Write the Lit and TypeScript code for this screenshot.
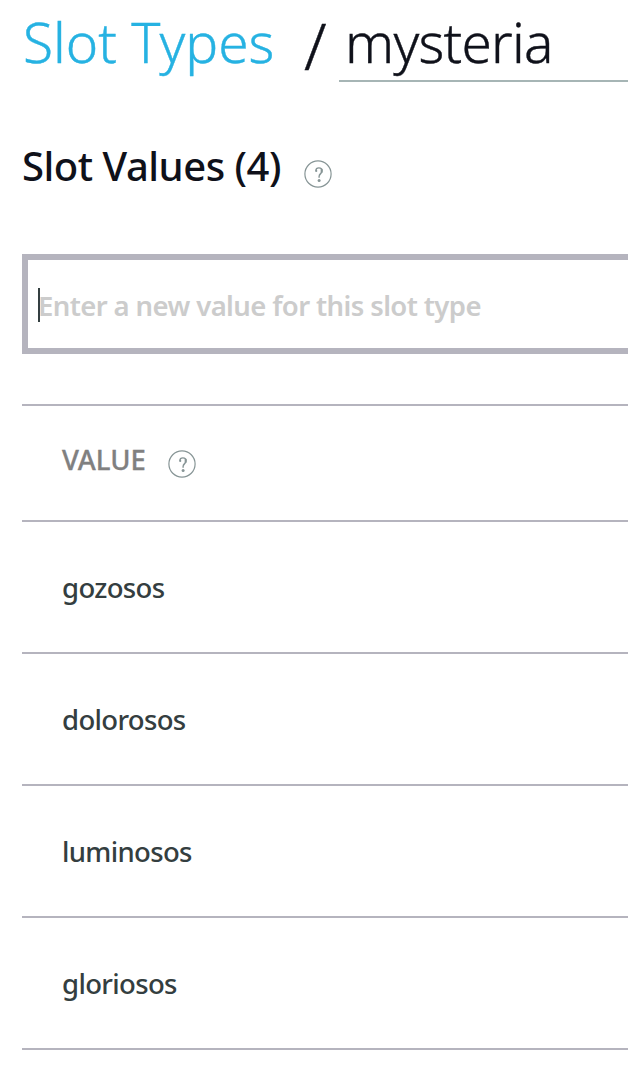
import { LitElement, html, css } from "lit";
import { customElement } from "lit/decorators.js";

@customElement("help-icon")
export class HelpIcon extends LitElement {
  static styles = css`
    :host { display: block; width: 28px; height: 28px; }
    svg { display: block; }
  `;
  render() {
    return html`<svg width="28" height="28" viewBox="0 0 28 28" fill="none" stroke="#879596">
      <circle cx="14" cy="14" r="13.1" stroke-width="1.2" />
      <path d="M11.9 10.6C11.9 8.8 13.1 7.9 14.9 7.9C17 7.9 18.1 9 18.1 10.8C18.1 13.6 15.2 13.6 15.1 16.4V17.8" stroke-width="1.4" />
      <circle cx="12.2" cy="10.9" r="1.1" fill="#879596" stroke="none" />
      <path d="M17.6 8.9V12.6" stroke-width="1.9" />
      <circle cx="15.1" cy="20.5" r="1.5" fill="#879596" stroke="none" />
    </svg>`;
  }
}

@customElement("app-root")
export class AppRoot extends LitElement {
  static styles = css`
    :host {
      display: block;
      height: 1084px;
      overflow: hidden;
      background: #fff;
      font-family: "Noto Sans", "Open Sans", sans-serif;
      color: #0f111a;
      white-space: nowrap;
    }
    .page { padding-left: 22px; display: flex; flex-direction: column; }
    .title { display: flex; height: 82px; font-size: 55px; line-height: 84px; font-weight: 300; -webkit-text-stroke: 0.4px currentColor; }
    .crumb { color: #26b2e2; width: 281px; padding-left: 1px; }
    .slash { width: 35px; font-size: 65px; line-height: 90px; }
    .name { flex: 1; box-sizing: border-box; height: 82px; padding-left: 6px; letter-spacing: -0.75px; border-bottom: 2px solid #a6b5b5; }
    .section { display: flex; height: 60px; margin-top: 56px; }
    .heading { width: 282px; font-size: 40px; line-height: 56px; font-weight: 500; letter-spacing: -0.48px; }
    .section help-icon { margin-top: 22px; }
    .entry {
      box-sizing: border-box; height: 100px; margin-top: 56px;
      border: 6px solid #b5b4be; border-right: 0; padding-left: 10px;
      display: flex; align-items: center;
    }
    .caret { width: 2px; height: 34px; margin-top: 2px; margin-right: -2px; background: #343f40; }
    .hint { font-size: 27.5px; line-height: 40px; font-weight: 600; letter-spacing: -0.61px; padding-top: 3px; color: #ccc; }
    .table { margin-top: 50px; border-top: 2px solid #b5b4be; }
    .row {
      box-sizing: border-box; height: 132px; padding: 2px 0 0 40px;
      border-bottom: 2px solid #b5b4be; display: flex; align-items: center;
      font-size: 27.5px; line-height: 40px; font-weight: 500; color: #343e40;
    }
    .value { letter-spacing: -0.66px; }
    .head { height: 116px; color: #808080; }
    .label { width: 106px; padding-bottom: 8px; -webkit-text-stroke: 0.3px currentColor; }
  `;

  private values = ["gozosos", "dolorosos", "luminosos", "gloriosos"];

  render() {
    return html`<div class="page">
      <div class="title">
        <span class="crumb">Slot Types</span><span class="slash">/</span><span class="name">mysteria</span>
      </div>
      <div class="section"><span class="heading">Slot Values (4)</span><help-icon></help-icon></div>
      <div class="entry"><span class="caret"></span><span class="hint">Enter a new value for this slot type</span></div>
      <div class="table">
        <div class="row head"><span class="label">VALUE</span><help-icon></help-icon></div>
        ${this.values.map((v) => html`<div class="row"><span class="value">${v}</span></div>`)}
      </div>
    </div>`;
  }
}
